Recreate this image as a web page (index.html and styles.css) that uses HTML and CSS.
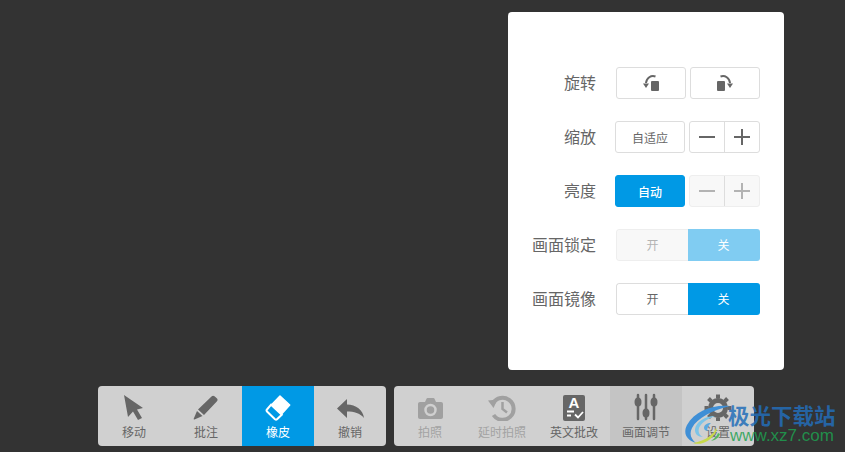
FILE: index.html
```html
<!DOCTYPE html>
<html lang="zh">
<head>
<meta charset="utf-8">
<title>画面调节</title>
<link rel="stylesheet" href="styles.css">
</head>
<body>
<main class="stage">
  <section class="panel">
    <div class="row">
      <span class="label">旋转</span>
      <div class="controls shifted">
        <button class="btn wide"><svg class="rot" viewBox="0 0 16 18"><rect x="8" y="7" width="8" height="10" rx="1"/><path class="rot-arc" d="M12.500 2.500C8 .8 3.500 4 3 9"/><path d="M0 9.500h6l-3 4.500z"/></svg></button>
        <button class="btn wide"><svg class="rot" viewBox="0 0 16 18"><rect x="0" y="7" width="8" height="10" rx="1"/><path class="rot-arc" d="M3.500 2.500C8 .8 12.500 4 13 9"/><path d="M10 9.500h6l-3 4.500z"/></svg></button>
      </div>
    </div>
    <div class="row">
      <span class="label">缩放</span>
      <div class="controls">
        <button class="btn wide">自适应</button>
        <div class="seg">
          <button class="seg-cell"><span class="minus"></span></button>
          <button class="seg-cell"><span class="plus"></span></button>
        </div>
      </div>
    </div>
    <div class="row">
      <span class="label">亮度</span>
      <div class="controls">
        <button class="btn wide primary">自动</button>
        <div class="seg disabled">
          <button class="seg-cell"><span class="minus"></span></button>
          <button class="seg-cell"><span class="plus"></span></button>
        </div>
      </div>
    </div>
    <div class="row">
      <span class="label">画面锁定</span>
      <div class="controls shifted">
        <div class="toggle locked">
          <span class="opt">开</span>
          <span class="opt on">关</span>
        </div>
      </div>
    </div>
    <div class="row">
      <span class="label">画面镜像</span>
      <div class="controls shifted">
        <div class="toggle">
          <span class="opt">开</span>
          <span class="opt on">关</span>
        </div>
      </div>
    </div>
  </section>

  <nav class="toolbars">
    <div class="toolbar">
      <div class="tool">
        <svg class="ico" viewBox="0 0 28 28"><path d="M4 2 23 15 17 16.500 22 25 18 27 13 18.500 8 24z"/></svg>
        <span>移动</span>
      </div>
      <div class="tool">
        <svg class="ico" viewBox="0 0 28 28"><path d="M19.500 3.500c1-1 2-1 3-.3l2.300 2c1 1 1 2 .2 3L12 22 6 16.500z"/><path d="M5 18l5.500 5-8 3.500c-.6.200-1-.2-.8-.8z"/></svg>
        <span>批注</span>
      </div>
      <div class="tool active">
        <svg class="ico" viewBox="0 0 28 28"><path class="eraser-top" d="M16 3 25.700 12 17.800 20.700 7.600 11.700z"/><path class="eraser-line" d="M7.100 11.700 3 16.500c-.6.700-.6 1.400 0 2l8 7.800c.7.600 1.400.6 2 0l4.800-4.600z"/></svg>
        <span>橡皮</span>
      </div>
      <div class="tool">
        <svg class="ico" viewBox="0 0 28 28"><path d="M1 15.500 11 6v5.500c9 0 16 5.500 17 13.500-4-5-10-6.500-17-6.500V25z"/></svg>
        <span>撤销</span>
      </div>
    </div>
    <div class="toolbar">
      <div class="tool off">
        <svg class="ico" viewBox="0 0 28 28"><path d="M9 9l1.500-3.300c.2-.5.600-.7 1-.7h6c.5 0 .8.200 1 .7L20 9h5c1.200 0 2 .8 2 2v13c0 1.200-.8 2-2 2H4c-1.200 0-2-.8-2-2V11c0-1.200.8-2 2-2z"/><circle class="cam-ring" cx="14.500" cy="17" r="5"/></svg>
        <span>拍照</span>
      </div>
      <div class="tool off">
        <svg class="ico" viewBox="0 0 28 28"><path class="hist" d="M5 10.500A11 11 0 1 1 5.500 22"/><path d="M0 7.500 9.500 6.500 5.500 15z"/><path class="hand" d="M14.500 9v7l4.500 3.500"/></svg>
        <span>延时拍照</span>
      </div>
      <div class="tool">
        <svg class="ico" viewBox="0 0 28 28"><rect x="3" y="2" width="22" height="26" rx="2"/><text class="doc-a" x="14" y="15">A</text><path class="doc-line" d="M7 18.500h7M7 22.500h4M15 21.500l3 3 5-5.500"/></svg>
        <span>英文批改</span>
      </div>
      <div class="tool current">
        <svg class="ico" viewBox="0 0 28 28"><path class="slider" d="M6 2v24M14 2v24M22 2v24"/><ellipse cx="6" cy="9" rx="3.500" ry="4.500"/><ellipse cx="14" cy="20" rx="3.500" ry="4.500"/><ellipse cx="22" cy="9" rx="3.500" ry="4.500"/></svg>
        <span>画面调节</span>
      </div>
      <div class="tool">
        <svg class="ico" viewBox="0 0 28 28"><circle class="gear" cx="14" cy="15" r="7.500"/><path class="teeth" d="M14 1.500v4M14 24.500v4M.5 15h4M23.500 15h4M4.500 5.500l2.800 2.800M20.700 21.700l2.800 2.800M23.500 5.500l-2.800 2.800M7.300 21.700l-2.800 2.800"/></svg>
        <span>设置</span>
      </div>
    </div>
  </nav>

  <div class="watermark">
    <svg class="wm-logo" viewBox="0 0 46 42">
      <path fill="#3f8fd6" d="M45 1C30-1 10 5 2 20c-4 8-1 15 9 18-5-4-7-9-4-15C12 13 28 5 45 1z"/>
      <path fill="#7cc4e8" d="M30 11C20 11 11 17 10 24c-.5 5 3 8 8 8-4-2-5-5-4-9 2-5 8-9 16-12z"/>
      <path fill="#5aa9e0" d="M26 18c-4 0-7 2-7 5 0 2 2 3 4 3-1-1-1-2 0-4 .5-2 2-3 3-4z"/>
      <path fill="#c8d94a" d="M8 38c8 3 18-2 23-11 1-2 1-3 0-4-1 5-10 13-23 15z"/>
      <path fill="#55b95f" d="M26 36c3-2 6-5 7-8l2 1c-1 3-4 6-9 7z"/>
    </svg>
    <div class="wm-text">
      <span class="wm-name">极光下载站</span>
      <span class="wm-url">www.xz7.com</span>
    </div>
  </div>
</main>
</body>
</html>
```

FILE: styles.css
```css
* {
  box-sizing: border-box;
}

html,
body {
  margin: 0;
  height: 100%;
}

body {
  background: #333;
  font-family: "Noto Sans CJK SC", "Liberation Sans", sans-serif;
  color: #666;
  overflow: hidden;
}

.stage {
  position: relative;
  display: flex;
  flex-direction: column;
  align-items: flex-start;
  width: 845px;
  height: 452px;
  padding-top: 12px;
}

.panel {
  display: flex;
  flex-direction: column;
  gap: 22px;
  width: 276px;
  height: 358px;
  margin-left: 508px;
  padding-top: 55px;
  background: #fff;
  border-radius: 4px;
}

.row {
  display: flex;
  align-items: center;
  height: 32px;
}

.label {
  width: 88px;
  height: 32px;
  margin-right: 19px;
  font-size: 16px;
  line-height: 30px;
  text-align: right;
  color: #666;
}

.controls {
  display: flex;
  gap: 4px;
  width: 145px;
  height: 32px;
}

.controls.shifted {
  padding-left: 1px;
}

button {
  margin: 0;
  padding: 0;
  font: inherit;
  color: inherit;
  background: none;
  border: 0;
}

.btn {
  display: flex;
  align-items: center;
  justify-content: center;
  width: 70px;
  height: 32px;
  font-size: 12px;
  color: #666;
  background: #fff;
  border: 1px solid #ddd;
  border-radius: 3px;
}

.btn.primary {
  color: #fff;
  font-weight: 500;
  background: #0099e5;
  border-color: #0099e5;
}

.rot {
  width: 16px;
  height: 18px;
  fill: #666;
}

.rot-arc {
  fill: none;
  stroke: #666;
  stroke-width: 2;
}

.seg {
  display: flex;
  width: 71px;
  height: 32px;
  border: 1px solid #ddd;
  border-radius: 3px;
}

.seg-cell {
  position: relative;
  display: flex;
  flex: 1;
  align-items: center;
  justify-content: center;
}

.seg-cell + .seg-cell {
  border-left: 1px solid #ddd;
}

.minus,
.plus {
  position: relative;
  display: block;
  width: 16px;
  height: 2px;
  background: #666;
}

.plus::after {
  content: "";
  position: absolute;
  left: 7px;
  top: -7px;
  width: 2px;
  height: 16px;
  background: #666;
}

.seg.disabled {
  background: #f8f8f8;
  border-color: #eee;
}

.seg.disabled .seg-cell + .seg-cell {
  border-left-color: #ddd;
}

.seg.disabled .minus,
.seg.disabled .plus,
.seg.disabled .plus::after {
  background: #b3b3b3;
}

.toggle {
  display: flex;
  width: 144px;
  height: 32px;
  font-size: 12px;
  line-height: 30px;
  text-align: center;
  border-radius: 3px;
  overflow: hidden;
}

.opt {
  flex: 0 0 72px;
  height: 32px;
  color: #666;
  border: 1px solid #ddd;
  border-right: 0;
  border-radius: 3px 0 0 3px;
}

.opt.on {
  padding-right: 1px;
  line-height: 32px;
  color: #fff;
  background: #0099e5;
  border: 0;
  border-radius: 0;
}

.toggle.locked .opt {
  color: #b3b3b3;
  background: #f8f8f8;
  border-color: #eee;
}

.toggle.locked .opt.on {
  color: #fff;
  background: #80ccf2;
}

.toolbars {
  display: flex;
  gap: 8px;
  margin: 16px 0 0 98px;
}

.toolbar {
  display: flex;
  height: 60px;
  background: #d0d0d0;
  border-radius: 4px;
  overflow: hidden;
}

.tool {
  display: flex;
  flex-direction: column;
  align-items: center;
  width: 72px;
  height: 60px;
  padding-top: 7px;
  font-size: 12px;
  line-height: 18px;
  color: #666;
}

.ico {
  display: block;
  width: 28px;
  height: 28px;
  margin-bottom: 2px;
  fill: #666;
}

.tool.active {
  color: #fff;
  background: #0099e5;
}

.tool.current {
  background: #c4c4c4;
}

.tool.off {
  color: #a3a3a3;
}

.tool.off .ico {
  fill: #a0a0a0;
}

.eraser-top {
  fill: #fff;
  stroke: #fff;
  stroke-width: 1.5;
  stroke-linejoin: round;
}

.eraser-line {
  fill: none;
  stroke: #fff;
  stroke-width: 2;
}

.cam-ring {
  fill: none;
  stroke: #d0d0d0;
  stroke-width: 2.5;
}

.hist {
  fill: none;
  stroke: #a0a0a0;
  stroke-width: 4;
}

.hand {
  fill: none;
  stroke: #a0a0a0;
  stroke-width: 2.500;
}

.doc-a {
  font-family: "Liberation Sans", sans-serif;
  font-size: 15px;
  font-weight: 700;
  text-anchor: middle;
  fill: #fff;
}

.doc-line {
  fill: none;
  stroke: #fff;
  stroke-width: 1.800;
}

.slider {
  fill: none;
  stroke: #666;
  stroke-width: 2.500;
  stroke-linecap: round;
}

.gear {
  fill: none;
  stroke: #666;
  stroke-width: 5;
}

.teeth {
  fill: none;
  stroke: #666;
  stroke-width: 4;
}

.watermark {
  position: absolute;
  left: 685px;
  top: 402px;
  display: flex;
  align-items: flex-start;
}

.wm-logo {
  display: block;
  width: 46px;
  height: 42px;
  margin: 3px -3px 0 0;
}

.wm-text {
  display: flex;
  flex-direction: column;
  align-items: flex-start;
}

.wm-name {
  font-size: 21.5px;
  line-height: 25px;
  font-weight: 700;
  color: rgba(35, 110, 185, 0.85);
  white-space: nowrap;
}

.wm-url {
  padding-left: 2px;
  font-family: "Liberation Sans", sans-serif;
  font-size: 17px;
  line-height: 18px;
  color: rgba(30, 160, 80, 0.85);
  white-space: nowrap;
}
```
